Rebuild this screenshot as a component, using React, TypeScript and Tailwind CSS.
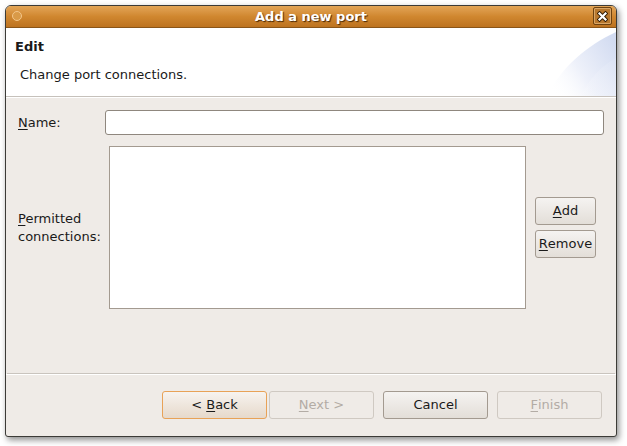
import React from 'react';

const font = { fontFamily: '"DejaVu Sans", "Liberation Sans", sans-serif' };

function U({ children }: { children: React.ReactNode }) {
  return <span className="underline underline-offset-2">{children}</span>;
}

function Btn({
  children,
  disabled,
  focus,
  className = '',
}: {
  children: React.ReactNode;
  disabled?: boolean;
  focus?: boolean;
  className?: string;
}) {
  const border = focus ? 'border-[#e8a257]' : disabled ? 'border-[#cfc9c2]' : 'border-[#a39a90]';
  const bg = focus
    ? 'bg-gradient-to-b from-[#f7f3ef] to-[#e6d9cb]'
    : disabled
      ? 'bg-[#efebe7]'
      : 'bg-gradient-to-b from-[#f5f3f1] to-[#e3ded8]';
  return (
    <button
      className={`flex h-[28px] items-center justify-center whitespace-pre rounded-[3px] border text-[13px] ${border} ${bg} ${
        disabled ? 'text-[#b3aca5]' : 'text-[#1a1a1a]'
      } ${className}`}
    >
      {children}
    </button>
  );
}

export default function App() {
  return (
    <div className="h-[446px] w-[627px] bg-white" style={font}>
      <div className="pl-[5px] pt-[5px]">
        <div className="flex h-[432px] w-[612px] flex-col rounded-t-[6px] rounded-b-[3px] border border-[#3c3b37] bg-[#efebe7] shadow-[2px_3px_6px_rgba(0,0,0,0.45)]">
          {/* title bar */}
          <div className="relative flex h-[22px] items-center justify-center rounded-t-[5px] border-b border-[#8a5518] bg-gradient-to-b from-[#e3a556] via-[#d0872f] to-[#bd7320]">
            <div className="absolute left-[6px] top-[5px] h-[10px] w-[10px] rounded-full border border-[#f3c68a] bg-[#d99a48]" />
            <span className="text-[13px] font-bold text-white [text-shadow:1px_1px_1px_#4a2a08]">Add a new port</span>
            <div className="absolute right-[4px] top-[1px] flex h-[18px] w-[19px] items-center justify-center rounded-[2px] border border-[#6e420f] bg-[#b8782e] shadow-[inset_0_0_0_1px_rgba(255,220,170,0.45)]">
              <svg width="11" height="11" viewBox="0 0 11 11">
                <path d="M2.5 2.5 L8.5 8.5 M8.5 2.5 L2.5 8.5" stroke="#2e1a03" strokeWidth="4" strokeLinecap="square" />
                <path d="M2.5 2.5 L8.5 8.5 M8.5 2.5 L2.5 8.5" stroke="#ffffff" strokeWidth="2.2" strokeLinecap="square" />
              </svg>
            </div>
          </div>

          {/* header */}
          <div className="relative h-[69px] overflow-hidden border-b border-[#c6c1bb] bg-white">
            <svg className="absolute right-0 top-0" width="70" height="69" viewBox="0 0 70 69">
              <defs>
                <linearGradient id="g" x1="0" y1="0.8" x2="1" y2="0.2">
                  <stop offset="0" stopColor="#ffffff" stopOpacity="0" />
                  <stop offset="0.45" stopColor="#eef1fa" />
                  <stop offset="1" stopColor="#d3dcf1" />
                </linearGradient>
                <linearGradient id="h" x1="0" y1="1" x2="1" y2="0">
                  <stop offset="0" stopColor="#ffffff" stopOpacity="0" />
                  <stop offset="1" stopColor="#dbe2f4" />
                </linearGradient>
              </defs>
              <path d="M0 69 C 15 40, 40 18, 70 4 L70 69 Z" fill="url(#g)" />
              <path d="M35 69 C 42 52, 55 38, 70 30 L70 69 Z" fill="url(#h)" />
            </svg>
            <div className="relative pl-[9px] pt-[9px] text-[13px] font-bold text-[#1a1a1a]">Edit</div>
            <div className="relative pl-[14px] pt-[8px] text-[13px] text-[#1a1a1a]">Change port connections.</div>
          </div>
          <div className="h-px bg-white" />

          {/* body */}
          <div className="flex flex-1 flex-col">
            <div className="flex items-center pl-[12px] pt-[12px]">
              <span className="w-[87px] text-[13px] text-[#1a1a1a]">
                <U>N</U>ame:
              </span>
              <div className="h-[25px] w-[499px] rounded-[3px] border border-[#8f877e] bg-white" />
            </div>
            <div className="flex pt-[11px]">
              <div className="flex w-[103px] items-center pl-[12px] text-[13px] leading-[18px] text-[#1a1a1a]">
                <span>
                  <U>P</U>ermitted
                  <br />
                  connections:
                </span>
              </div>
              <div className="h-[163px] w-[417px] border border-[#a39a90] bg-white" />
              <div className="flex flex-col justify-center gap-[5px] pl-[9px]">
                <Btn className="w-[61px]">
                  <U>A</U>dd
                </Btn>
                <Btn className="w-[61px]">
                  <U>R</U>emove
                </Btn>
              </div>
            </div>
            <div className="flex-1" />
            <div className="mx-[1px] h-px bg-[#c9c4be]" />
            <div className="h-px bg-white" />
            <div className="flex items-center justify-end pb-[17px] pr-[14px] pt-[16px]">
              <Btn focus className="w-[105px]">
                {'< '}
                <U>B</U>ack
              </Btn>
              <Btn disabled className="ml-[2px] w-[105px]">
                <U>N</U>
                {'ext >'}
              </Btn>
              <Btn className="ml-[9px] w-[105px]">Cancel</Btn>
              <Btn disabled className="ml-[9px] w-[105px]">
                <U>F</U>inish
              </Btn>
            </div>
          </div>
        </div>
      </div>
    </div>
  );
}
